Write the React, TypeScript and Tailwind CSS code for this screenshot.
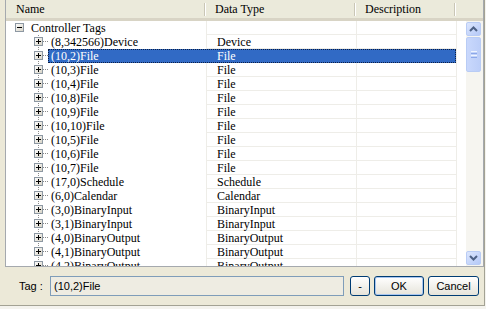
import React from "react";

type Row = { name: string; type: string; sel?: boolean };

const rows: Row[] = [
  { name: "(8,342566)Device", type: "Device" },
  { name: "(10,2)File", type: "File", sel: true },
  { name: "(10,3)File", type: "File" },
  { name: "(10,4)File", type: "File" },
  { name: "(10,8)File", type: "File" },
  { name: "(10,9)File", type: "File" },
  { name: "(10,10)File", type: "File" },
  { name: "(10,5)File", type: "File" },
  { name: "(10,6)File", type: "File" },
  { name: "(10,7)File", type: "File" },
  { name: "(17,0)Schedule", type: "Schedule" },
  { name: "(6,0)Calendar", type: "Calendar" },
  { name: "(3,0)BinaryInput", type: "BinaryInput" },
  { name: "(3,1)BinaryInput", type: "BinaryInput" },
  { name: "(4,0)BinaryOutput", type: "BinaryOutput" },
  { name: "(4,1)BinaryOutput", type: "BinaryOutput" },
  { name: "(4,2)BinaryOutput", type: "BinaryOutput" },
];

function Box({ x, plus }: { x: number; plus: boolean }) {
  return (
    <g>
      <defs>
        <linearGradient id="bx" x1="0" y1="0" x2="1" y2="1">
          <stop offset="0" stopColor="#ffffff" />
          <stop offset="1" stopColor="#d6d2c4" />
        </linearGradient>
      </defs>
      <rect x={x + 0.5} y={2.5} width={8} height={8} fill="url(#bx)" stroke="#8d98a3" />
      <line x1={x + 2} y1={6.5} x2={x + 7} y2={6.5} stroke="#000" />
      {plus && <line x1={x + 4.5} y1={4} x2={x + 4.5} y2={9} stroke="#000" />}
    </g>
  );
}

function Header() {
  const Div = () => (
    <div className="ml-auto flex h-[13px]">
      <div className="w-[1px] bg-[#C9C6B6]" />
      <div className="w-[1px] bg-white" />
    </div>
  );
  return (
    <div className="flex h-[21px] bg-[#EBEADB] border-b-[3px] border-[#D8D4C5] items-center text-[12px] text-black">
      <div className="w-[200px] flex items-center pl-[10px]">
        <span>Name</span>
        <Div />
      </div>
      <div className="w-[150px] flex items-center pl-[9px]">
        <span>Data Type</span>
        <Div />
      </div>
      <div className="w-[100px] flex items-center pl-[9px]">
        <span>Description</span>
        <Div />
      </div>
      <div className="flex-1" />
    </div>
  );
}

function TreeRow({ r }: { r: Row }) {
  return (
    <div className="flex h-[14px] leading-[14px]">
      <svg width={42} height={14} className="shrink-0">
        <line x1={32.5} y1={0} x2={32.5} y2={14} stroke="#8a8a8a" strokeDasharray="1 1" />
        <line x1={37} y1={6.5} x2={42} y2={6.5} stroke="#8a8a8a" strokeDasharray="1 1" />
        <Box x={28} plus={true} />
      </svg>
      <div
        className={
          "flex " +
          (r.sel
            ? "bg-[#316AC5] text-white outline-1 outline-dotted -outline-offset-1 outline-[#0B1F45]"
            : "text-black")
        }
      >
        <div className="w-[158px] pl-[3px] whitespace-nowrap overflow-hidden">{r.name}</div>
        <div
          className={
            "w-[150px] pl-[10px] border-l whitespace-nowrap " +
            (r.sel ? "border-transparent" : "border-[#EEEDE8] border-b border-b-[#EEEDE8]")
          }
        >
          {r.type}
        </div>
        <div
          className={
            "w-[100px] border-l " +
            (r.sel ? "border-transparent" : "border-[#EEEDE8] border-b border-b-[#EEEDE8]")
          }
        />
      </div>
      <div className="w-[10px] border-l border-[#EEEDE8]" />
    </div>
  );
}

function RootRow() {
  return (
    <div className="flex h-[14px] leading-[14px]">
      <svg width={22} height={14} className="shrink-0">
        <Box x={9} plus={false} />
      </svg>
      <div className="w-[178px] pl-[3px] text-black whitespace-nowrap">Controller Tags</div>
      <div className="w-[150px] border-l border-b border-[#EEEDE8]" />
      <div className="w-[100px] border-l border-b border-[#EEEDE8]" />
      <div className="w-[10px] border-l border-[#EEEDE8]" />
    </div>
  );
}

function SbButton({ up }: { up: boolean }) {
  return (
    <div className="h-[14px] w-[15px] rounded-[2px] border border-[#B9CCF5] bg-gradient-to-br from-[#DCE6FD] to-[#B5C9F7] flex items-center justify-center">
      <svg width={9} height={6} viewBox="0 0 9 6">
        {up ? (
          <path d="M1 5 L4.5 1.5 L8 5" fill="none" stroke="#4D6185" strokeWidth={2} />
        ) : (
          <path d="M1 1 L4.5 4.5 L8 1" fill="none" stroke="#4D6185" strokeWidth={2} />
        )}
      </svg>
    </div>
  );
}

function Scrollbar() {
  return (
    <div className="w-[17px] shrink-0 bg-[#F6F5F0] flex flex-col py-[1px] pl-0 pr-[2px]">
      <SbButton up={true} />
      <div className="mt-[1px] h-[35px] w-[15px] rounded-[2px] border border-[#B9CCF5] bg-gradient-to-r from-[#C9D8FC] to-[#BCCEF8] flex flex-col items-center justify-center gap-[1px]">
        <div className="w-[6px] h-[1px] bg-[#EEF4FE]" />
        <div className="w-[6px] h-[1px] bg-[#8CA8E8]" />
        <div className="w-[6px] h-[1px] bg-[#EEF4FE]" />
        <div className="w-[6px] h-[1px] bg-[#8CA8E8]" />
      </div>
      <div className="flex-1" />
      <SbButton up={false} />
    </div>
  );
}

export default function App() {
  return (
    <div className="w-[486px] h-[309px] bg-[#F4F3EE] overflow-hidden">
      <div
        className="w-[485px] h-[306px] bg-[#ECE9D8] border-r border-b border-[#A3A294] flex flex-col"
      >
        <div
          className="ml-[5px] w-[479px] h-[267px] shrink-0 border-l border-r border-b border-[#A5A9AE] bg-white flex flex-col overflow-hidden"
          style={{ fontFamily: '"Liberation Serif", serif' }}
        >
          <Header />
          <div className="flex h-[245px] overflow-hidden">
            <div className="w-[460px] text-[12px] overflow-hidden">
              <RootRow />
              {rows.map((r, i) => (
                <TreeRow key={i} r={r} />
              ))}
            </div>
            <Scrollbar />
          </div>
        </div>
        <div
          className="flex items-center h-[38px] text-[11px] text-black"
          style={{ fontFamily: '"Liberation Sans", sans-serif' }}
        >
          <span className="ml-[19px] w-[31px]">Tag :</span>
          <div className="w-[294px] h-[20px] border border-[#7F9DB9] bg-[#EEECE2] flex items-center pl-[3px]">
            (10,2)File
          </div>
          <button className="ml-[6px] w-[20px] h-[20px] rounded-[3px] border border-[#003C74] bg-gradient-to-b from-white to-[#E6E4DA] flex items-center justify-center">
            -
          </button>
          <button className="ml-[4px] w-[50px] h-[20px] rounded-[3px] border border-[#003C74] bg-gradient-to-b from-white to-[#E6E4DA] flex items-center justify-center shadow-[inset_0_0_0_1px_#A8C6F0]">
            OK
          </button>
          <button className="ml-[4px] w-[51px] h-[20px] rounded-[3px] border border-[#003C74] bg-gradient-to-b from-white to-[#E6E4DA] flex items-center justify-center">
            Cancel
          </button>
        </div>
      </div>
    </div>
  );
}
